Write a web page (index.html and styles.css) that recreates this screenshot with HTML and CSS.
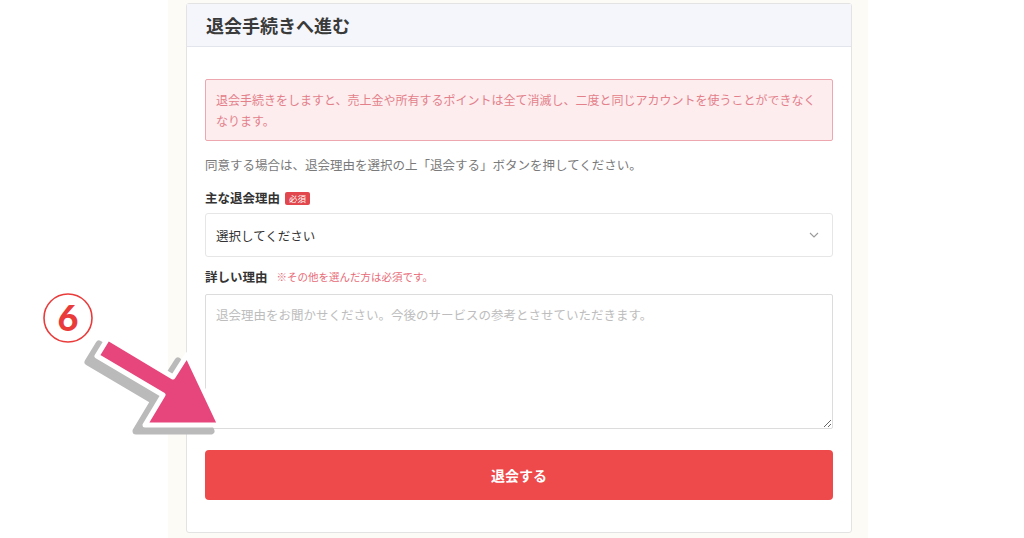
FILE: index.html
```html
<!DOCTYPE html>
<html lang="ja">
<head>
  <meta charset="UTF-8">
  <title>退会手続き</title>
  <link rel="stylesheet" href="styles.css">
</head>
<body>
  <div class="page">
    <div class="card">
      <div class="card-header">
        <h1>退会手続きへ進む</h1>
      </div>

      <div class="card-body">
        <div class="alert">
          退会手続きをしますと、売上金や所有するポイントは全て消滅し、二度と同じアカウントを使うことができなくなります。
        </div>

        <p class="lead">同意する場合は、退会理由を選択の上「退会する」ボタンを押してください。</p>

        <label class="field-label">主な退会理由 <span class="badge">必須</span></label>
        <div class="select-wrap">
          <select class="select">
            <option>選択してください</option>
          </select>
          <svg class="chevron" width="10" height="6" viewBox="0 0 10 6">
            <path d="M1 1 L5 5 L9 1" fill="none" stroke="#9a9a9a" stroke-width="1.1"/>
          </svg>
        </div>

        <label class="field-label second">詳しい理由 <span class="note">※その他を選んだ方は必須です。</span></label>
        <textarea class="textarea" placeholder="退会理由をお聞かせください。今後のサービスの参考とさせていただきます。"></textarea>

        <button class="submit-btn">退会する</button>
      </div>
    </div>
  </div>

  <!-- annotation -->
  <svg class="annotation" width="260" height="440" viewBox="0 0 260 440">
    <circle cx="68" cy="318" r="24" fill="#fff" stroke="#ea3b3b" stroke-width="1.6"/>
    <text x="68" y="331" text-anchor="middle" class="step-num">6</text>
    <g>
      <polygon transform="translate(-9 6)" fill="#bababa" stroke="#bababa" stroke-width="7" stroke-linejoin="round"
        points="108,338 173,377 187,355 220,425 145,425 163,395 97,356"/>
      <polygon fill="#e6467c" stroke="#fff" stroke-width="5" stroke-linejoin="round"
        points="108,338 173,377 187,355 220,425 145,425 163,395 97,356"/>
    </g>
  </svg>
</body>
</html>
```

FILE: styles.css
```css
body {
  margin: 0;
  background: #fff;
  font-family: "Noto Sans CJK JP", "Noto Sans", sans-serif;
  color: #333;
}

.page {
  width: 666px;
  margin-left: 168px;
  padding: 3px 16px 0 18px;
  background: #fdfbf6;
  height: 535px;
}

.card {
  background: #fff;
  border: 1px solid #e3e3e3;
  border-radius: 3px;
}

.card-header {
  background: #f4f6fb;
  border-bottom: 1px solid #e2e5ec;
  padding: 8px 19px;
}

.card-header h1 {
  margin: 0;
  font-size: 18px;
  line-height: 26px;
  font-weight: bold;
  color: #3a3a3a;
}

.card-body {
  padding: 32px 18px 32px 18px;
  display: flex;
  flex-direction: column;
}

.alert {
  background: #fdedef;
  border: 1px solid #eca8ae;
  border-radius: 2px;
  color: #e3808a;
  font-size: 12px;
  line-height: 21px;
  padding: 9px 10px;
}

.lead {
  margin: 14px 0 0;
  font-size: 12.5px;
  line-height: 20px;
  color: #7a7a7a;
}

.field-label {
  margin-top: 13px;
  font-size: 12.5px;
  line-height: 20px;
  font-weight: bold;
  color: #333;
  display: flex;
  align-items: center;
}

.field-label.second {
  margin-top: 10px;
}

.badge {
  background: #e1474c;
  color: #fff;
  font-size: 8.5px;
  font-weight: normal;
  line-height: 13px;
  padding: 0 4px;
  border-radius: 2px;
  margin-left: 5px;
}

.note {
  color: #e86b77;
  font-size: 10.5px;
  font-weight: normal;
  margin-left: 9px;
}

.select-wrap {
  position: relative;
  margin-top: 5px;
}

.select {
  appearance: none;
  -webkit-appearance: none;
  box-sizing: border-box;
  width: 100%;
  height: 44px;
  border: 1px solid #e6e6e6;
  border-radius: 3px;
  background: #fff;
  font-family: inherit;
  font-size: 12.5px;
  color: #333;
  padding: 0 10px;
}

.chevron {
  position: absolute;
  right: 14px;
  top: 19px;
}

.textarea {
  margin-top: 7px;
  height: 135px;
  box-sizing: border-box;
  border: 1px solid #dcdcdc;
  border-radius: 2px;
  font-family: inherit;
  font-size: 12.5px;
  padding: 10px 10px;
  resize: vertical;
}

.textarea::placeholder {
  color: #bdbdbd;
}

.submit-btn {
  margin-top: 21px;
  height: 50px;
  border: none;
  border-radius: 4px;
  background: #ee4a4b;
  color: #fff;
  font-family: inherit;
  font-size: 14px;
  font-weight: bold;
  cursor: pointer;
}

.annotation {
  position: absolute;
  left: 0;
  top: 0;
}

.step-num {
  font-family: "Lato", "Noto Sans", sans-serif;
  font-weight: 900;
  font-size: 36px;
  fill: #ea3b3b;
}
```
